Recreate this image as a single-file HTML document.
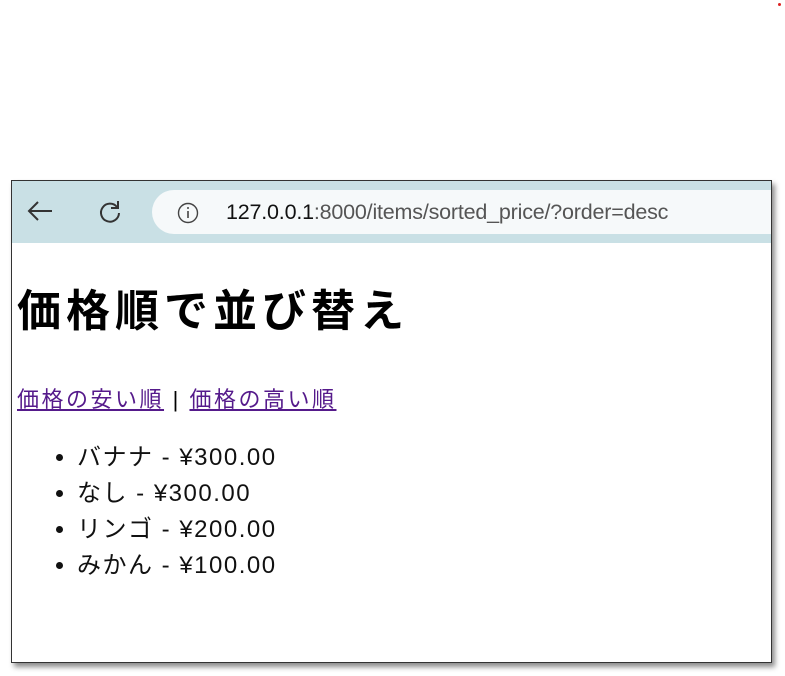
<!DOCTYPE html>
<html><head><meta charset="utf-8"><style>
body{margin:0;width:785px;height:676px;background:#fff;position:relative;overflow:hidden;font-family:"Liberation Sans","Noto Sans CJK JP",sans-serif;}
.dot{position:absolute;left:778px;top:3px;width:3px;height:3px;background:#d22;border-radius:50%}
.win{position:absolute;left:11px;top:180px;width:759px;height:481px;border:1px solid #333;background:#fff;box-shadow:3px 4px 5px rgba(0,0,0,.45);overflow:hidden}
.bar{position:absolute;left:0;top:0;width:100%;height:62px;background:#c9e0e5}
.addr{position:absolute;left:140px;top:9px;width:640px;height:44px;border-radius:22px;background:#f6f9fa}
.url{position:absolute;left:214px;top:19px;font-size:21.5px;color:#555;letter-spacing:-0.2px}
.url b{font-weight:normal;color:#111}
h1{position:absolute;left:5px;top:94px;margin:0;font-size:44px;letter-spacing:5px;font-weight:bold;color:#000}
.links{position:absolute;left:5px;top:201px;font-size:22px;letter-spacing:2.5px;color:#000}
.links a{color:#551a8b;text-decoration:underline}
ul{position:absolute;left:22px;top:259px;margin:0;padding:0 0 0 43px;font-size:24px;letter-spacing:1.5px;line-height:36px;color:#111}
</style></head><body>
<div class="dot"></div>
<div class="win">
<div class="bar">
<svg style="position:absolute;left:14px;top:18px" width="28" height="24" viewBox="0 0 28 24"><path d="M26 12H3M12 3L3 12l9 9" fill="none" stroke="#333" stroke-width="2"/></svg>
<svg style="position:absolute;left:84px;top:17px" width="28" height="28" viewBox="0 0 28 28"><path d="M21 9A9 9 0 1 0 23 15" fill="none" stroke="#333" stroke-width="2"/><path d="M22 3v7h-7" fill="none" stroke="#333" stroke-width="2"/></svg>
<div class="addr"></div>
<svg style="position:absolute;left:165px;top:21px" width="22" height="22" viewBox="0 0 22 22"><circle cx="11" cy="11" r="9.5" fill="none" stroke="#444" stroke-width="1.4"/><path d="M11 9v7" stroke="#444" stroke-width="1.6"/><circle cx="11" cy="6" r="1" fill="#444"/></svg>
<div class="url"><b>127.0.0.1</b>:8000/items/sorted_price/?order=desc</div>
</div>
<h1>価格順で並び替え</h1>
<div class="links"><a>価格の安い順</a> | <a>価格の高い順</a></div>
<ul><li>バナナ - ¥300.00</li><li>なし - ¥300.00</li><li>リンゴ - ¥200.00</li><li>みかん - ¥100.00</li></ul>
</div>
</body></html>
